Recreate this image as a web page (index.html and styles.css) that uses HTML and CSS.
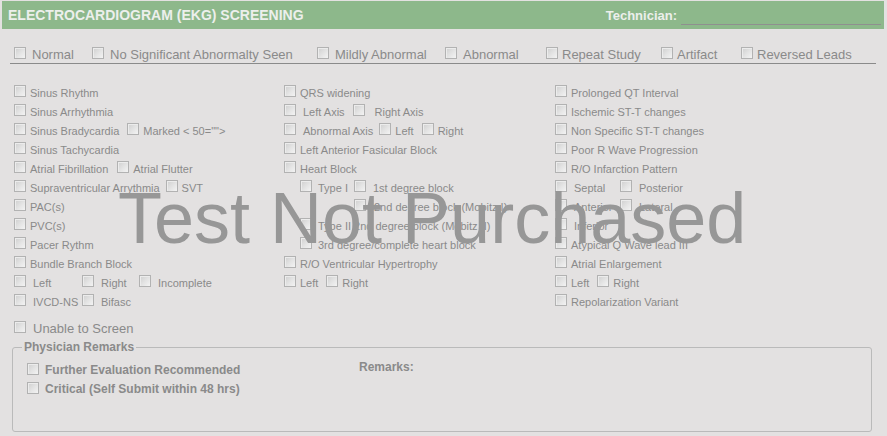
FILE: index.html
```html
<!DOCTYPE html>
<html>
<head>
<meta charset="utf-8">
<link rel="stylesheet" href="styles.css">
</head>
<body>
<div class="hdr">
  <span class="title">ELECTROCARDIOGRAM (EKG) SCREENING</span>
  <span class="tech"><span class="techlbl">Technician:</span><span class="tline"></span></span>
</div>

<div class="opts">
  <div class="opt"><span class="cb"></span><span class="ol">Normal</span></div>
  <div class="opt"><span class="cb"></span><span class="ol">No Significant Abnormalty Seen</span></div>
  <div class="opt"><span class="cb"></span><span class="ol">Mildly Abnormal</span></div>
  <div class="opt"><span class="cb"></span><span class="ol">Abnormal</span></div>
  <div class="opt"><span class="cb"></span><span class="ol tight">Repeat Study</span></div>
  <div class="opt"><span class="cb"></span><span class="ol tight">Artifact</span></div>
  <div class="opt"><span class="cb"></span><span class="ol tight">Reversed Leads</span></div>
</div>

<div class="cols">
  <div class="col">
    <div class="row"><span class="cb"></span><span class="lb">Sinus Rhythm</span></div>
    <div class="row"><span class="cb"></span><span class="lb">Sinus Arrhythmia</span></div>
    <div class="row"><span class="cb"></span><span class="lb g8">Sinus Bradycardia</span><span class="cb"></span><span class="lb">Marked &lt; 50=""&gt;</span></div>
    <div class="row"><span class="cb"></span><span class="lb">Sinus Tachycardia</span></div>
    <div class="row"><span class="cb"></span><span class="lb g9">Atrial Fibrillation</span><span class="cb"></span><span class="lb">Atrial Flutter</span></div>
    <div class="row"><span class="cb"></span><span class="lb g6">Supraventricular Arrythmia</span><span class="cb"></span><span class="lb">SVT</span></div>
    <div class="row"><span class="cb"></span><span class="lb">PAC(s)</span></div>
    <div class="row"><span class="cb"></span><span class="lb">PVC(s)</span></div>
    <div class="row"><span class="cb"></span><span class="lb">Pacer Rythm</span></div>
    <div class="row"><span class="cb"></span><span class="lb">Bundle Branch Block</span></div>
    <div class="row sub68">
      <div class="it"><span class="cb"></span><span class="lb w7">Left</span></div>
      <div class="it"><span class="cb"></span><span class="lb w7">Right</span></div>
      <div class="it"><span class="cb"></span><span class="lb w7">Incomplete</span></div>
    </div>
    <div class="row sub68">
      <div class="it"><span class="cb"></span><span class="lb w7">IVCD-NS</span></div>
      <div class="it"><span class="cb"></span><span class="lb w7">Bifasc</span></div>
    </div>
  </div>

  <div class="col">
    <div class="row"><span class="cb"></span><span class="lb">QRS widening</span></div>
    <div class="row"><span class="cb"></span><span class="lb w7 g8">Left Axis</span><span class="cb"></span><span class="lb w10">Right Axis</span></div>
    <div class="row"><span class="cb"></span><span class="lb w7 g6">Abnormal Axis</span><span class="cb"></span><span class="lb g8">Left</span><span class="cb"></span><span class="lb">Right</span></div>
    <div class="row"><span class="cb"></span><span class="lb">Left Anterior Fasicular Block</span></div>
    <div class="row"><span class="cb"></span><span class="lb">Heart Block</span></div>
    <div class="row ind16 sub54">
      <div class="it"><span class="cb"></span><span class="lb w6">Type I</span></div>
      <div class="it"><span class="cb"></span><span class="lb w7">1st degree block</span></div>
    </div>
    <div class="row ind70"><span class="cb"></span><span class="lb w8">2nd degree block (Mobitz I)</span></div>
    <div class="row ind16"><span class="cb"></span><span class="lb w6">Type II 2nd degree block (Mobitz II)</span></div>
    <div class="row ind16"><span class="cb"></span><span class="lb w6">3rd degree/complete heart block</span></div>
    <div class="row"><span class="cb"></span><span class="lb">R/O Ventricular Hypertrophy</span></div>
    <div class="row"><span class="cb"></span><span class="lb g8">Left</span><span class="cb"></span><span class="lb">Right</span></div>
  </div>

  <div class="col">
    <div class="row"><span class="cb"></span><span class="lb">Prolonged QT Interval</span></div>
    <div class="row"><span class="cb"></span><span class="lb">Ischemic ST-T changes</span></div>
    <div class="row"><span class="cb"></span><span class="lb">Non Specific ST-T changes</span></div>
    <div class="row"><span class="cb"></span><span class="lb">Poor R Wave Progression</span></div>
    <div class="row"><span class="cb"></span><span class="lb">R/O Infarction Pattern</span></div>
    <div class="row sub65">
      <div class="it"><span class="cb"></span><span class="lb w7">Septal</span></div>
      <div class="it"><span class="cb"></span><span class="lb w7">Posterior</span></div>
    </div>
    <div class="row sub65">
      <div class="it"><span class="cb"></span><span class="lb w7">Anterior</span></div>
      <div class="it"><span class="cb"></span><span class="lb w7">Lateral</span></div>
    </div>
    <div class="row"><span class="cb"></span><span class="lb w7">Inferior</span></div>
    <div class="row"><span class="cb"></span><span class="lb">Atypical Q Wave lead III</span></div>
    <div class="row"><span class="cb"></span><span class="lb">Atrial Enlargement</span></div>
    <div class="row"><span class="cb"></span><span class="lb g8">Left</span><span class="cb"></span><span class="lb">Right</span></div>
    <div class="row"><span class="cb"></span><span class="lb">Repolarization Variant</span></div>
  </div>
</div>

<div class="unable"><span class="cb"></span><span class="ul">Unable to Screen</span></div>

<fieldset class="remarks">
  <legend>Physician Remarks</legend>
  <div class="rm-body">
    <div class="rm-left">
      <div class="row"><span class="cb"></span><span class="bl">Further Evaluation Recommended</span></div>
      <div class="row"><span class="cb"></span><span class="bl">Critical (Self Submit within 48 hrs)</span></div>
    </div>
    <div class="rm-label">Remarks:</div>
  </div>
</fieldset>

<div class="wm">Test Not Purchased</div>
</body>
</html>
```

FILE: styles.css
```css
html, body {
  margin: 0;
  padding: 0;
}
body {
  background: #e3e1e1;
  font-family: "Liberation Sans", Arial, sans-serif;
  color: #8a8a8a;
  width: 887px;
  height: 436px;
  overflow: hidden;
  position: relative;
}

.hdr {
  margin: 1px 3px 0 2px;
  height: 28px;
  background: #8db88b;
  display: flex;
  align-items: center;
  justify-content: space-between;
  padding: 0 3px 0 6px;
  color: #ecefec;
}
.title {
  font-weight: bold;
  font-size: 14px;
}
.tech {
  display: flex;
  align-items: center;
  align-self: stretch;
}
.techlbl {
  font-weight: bold;
  font-size: 13px;
  margin-right: 4px;
}
.tline {
  width: 200px;
  height: 1px;
  background: #8f8f8f;
  align-self: flex-end;
  margin-bottom: 4px;
}

.cb {
  flex: none;
  display: inline-block;
  width: 12px;
  height: 12px;
  box-sizing: border-box;
  border: 1px solid #b2b2b2;
  background: linear-gradient(135deg, #cfcfcf 0%, #e6e6e6 60%, #f3f3f3 100%);
  box-shadow: inset 1px 1px 0 #ececec;
}

.opts {
  margin: 16px 11px 0 10px;
  padding: 2px 0 0 4px;
  height: 16px;
  border-bottom: 1px solid #8a8a8a;
  display: grid;
  grid-template-columns: 78px 225px 128px 101px 115px 80px 1fr;
}
.opt {
  display: flex;
  align-items: flex-start;
}
.ol {
  font-size: 13px;
  line-height: 16px;
  margin-left: 6px;
  white-space: nowrap;
}
.ol.tight {
  margin-left: 4px;
}

.cols {
  margin-top: 18px;
  padding-left: 14px;
  display: grid;
  grid-template-columns: 270px 271px 1fr;
}
.col {
  display: flex;
  flex-direction: column;
}
.row {
  display: flex;
  align-items: flex-start;
  height: 19px;
}
.row .cb {
  margin-top: 3px;
}
.it {
  display: flex;
  align-items: flex-start;
}
.lb {
  font-size: 11px;
  line-height: 15px;
  padding-top: 4px;
  margin-left: 4px;
  margin-right: 4px;
  white-space: nowrap;
}
.lb.w6 { margin-left: 6px; }
.lb.w7 { margin-left: 7px; }
.lb.w8 { margin-left: 8px; }
.lb.w10 { margin-left: 10px; }
.lb.g6 { margin-right: 6px; }
.lb.g8 { margin-right: 8px; }
.lb.g9 { margin-right: 9px; }

.sub68 {
  display: grid;
  grid-template-columns: 68px 57px auto;
  justify-content: start;
}
.sub65 {
  display: grid;
  grid-template-columns: 65px auto;
  justify-content: start;
}
.sub54 {
  display: grid;
  grid-template-columns: 54px auto;
  justify-content: start;
}
.ind16 { padding-left: 16px; }
.ind70 { padding-left: 70px; }

.unable {
  margin-top: 8px;
  padding-left: 14px;
  height: 19px;
  display: flex;
  align-items: flex-start;
}
.unable .cb {
  margin-top: 3px;
}
.ul {
  font-size: 13px;
  line-height: 15px;
  padding-top: 3px;
  margin-left: 7px;
}

.remarks {
  margin: 3px 15px 0 12px;
  padding: 6px 14px 33px 14px;
  border: 1px solid #bababa;
  border-radius: 3px;
  min-inline-size: 0;
}
.remarks legend {
  font-weight: bold;
  font-size: 12px;
  line-height: 14px;
  padding: 0 2px;
  margin-left: -5px;
}
.rm-body {
  display: flex;
  align-items: flex-start;
}
.rm-left {
  width: 332px;
}
.bl {
  font-size: 12px;
  font-weight: bold;
  line-height: 15px;
  padding-top: 3px;
  margin-left: 6px;
  white-space: nowrap;
}
.rm-label {
  font-size: 12px;
  font-weight: bold;
  line-height: 15px;
}

.wm {
  position: absolute;
  left: 118px;
  top: 182px;
  font-size: 72px;
  line-height: 72px;
  color: #979797;
  white-space: nowrap;
  pointer-events: none;
}
```
